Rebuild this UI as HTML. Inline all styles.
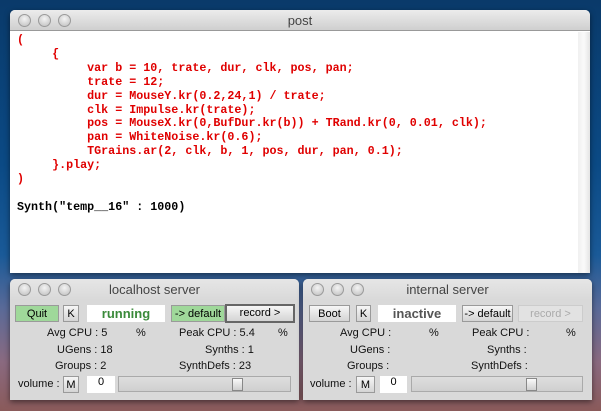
<!DOCTYPE html>
<html><head><style>
*{margin:0;padding:0;box-sizing:border-box}
body{width:601px;height:411px;overflow:hidden;position:relative;background:linear-gradient(180deg,#0a3a6a 0%,#0b4a85 40%,#1a5a98 62%,#5a6a98 75%,#8a6a80 88%,#8a5a5a 100%);font-family:"Liberation Sans",sans-serif}
.a{position:absolute}
.win{position:absolute;background:#d9d9d9;border-radius:5px 5px 0 0;overflow:hidden;box-shadow:0 2px 6px rgba(0,0,0,.5)}
.tb{position:absolute;left:0;right:0;top:0;height:21px;background:linear-gradient(#ececec,#cfcfcf);border-bottom:1px solid #999;text-align:center;font-size:13px;color:#444;line-height:21px}
.lt{position:absolute;top:4px;width:13px;height:13px;border-radius:50%;background:radial-gradient(circle at 50% 35%,#f4f4f4,#bdbdbd);border:1px solid #9a9a9a}
pre{position:absolute;left:17px;top:34px;font:bold 11.7px/13.9px "Liberation Mono",monospace;color:#e00000}
.btn{position:absolute;height:17px;font-size:11px;text-align:center;line-height:17px;background:linear-gradient(#f6f6f6,#d4d4d4);border:1px solid #9a9a9a;color:#000}
.fld{position:absolute;height:17px;background:#fff;text-align:center;font-weight:bold;font-size:13px;line-height:17px}
.t{position:absolute;font-size:11px;color:#111;line-height:13px}
.sl{position:absolute;height:16px;background:linear-gradient(#dedede,#cfcfcf);border:1px solid #aaa}
.th{position:absolute;top:1px;width:11px;height:13px;background:linear-gradient(#fafafa,#cfcfcf);border:1px solid #888}
</style></head><body>
<div class="win" style="left:10px;top:10px;width:580px;height:263px;background:#fff">
<div class="tb">post</div>
<div class="lt" style="left:8px"></div><div class="lt" style="left:28px"></div><div class="lt" style="left:48px"></div>
<div class="a" style="left:568px;top:22px;width:12px;height:241px;background:linear-gradient(90deg,#f0f0f0,#fafafa,#e4e4e4)"></div>
</div>
<pre>(
     {
          var b = 10, trate, dur, clk, pos, pan;
          trate = 12;
          dur = MouseY.kr(0.2,24,1) / trate;
          clk = Impulse.kr(trate);
          pos = MouseX.kr(0,BufDur.kr(b)) + TRand.kr(0, 0.01, clk);
          pan = WhiteNoise.kr(0.6);
          TGrains.ar(2, clk, b, 1, pos, dur, pan, 0.1);
     }.play;
)

<span style="color:#000">Synth("temp__16" : 1000)</span></pre>

<div class="win" style="left:10px;top:279px;width:289px;height:121px">
<div class="tb" style="border-bottom:none;background:linear-gradient(#e6e6e6,#d9d9d9)">localhost server</div>
<div class="lt" style="left:8px"></div><div class="lt" style="left:28px"></div><div class="lt" style="left:48px"></div>
</div>
<div class="btn" style="left:15px;top:305px;width:44px;background:#9fd89a">Quit</div>
<div class="btn" style="left:63px;top:305px;width:16px">K</div>
<div class="fld" style="left:87px;top:305px;width:78px;color:#3a8a3a">running</div>
<div class="btn" style="left:171px;top:305px;width:54px;background:#9fd89a">-&gt; default</div>
<div class="btn" style="left:225px;top:304px;width:70px;height:19px;border:2px solid #666;line-height:15px">record &gt;</div>
<div class="t" style="left:47px;top:327px">Avg CPU : 5</div><div class="t" style="left:136px;top:327px">%</div>
<div class="t" style="left:179px;top:327px">Peak CPU : 5.4</div><div class="t" style="left:278px;top:327px">%</div>
<div class="t" style="left:57px;top:344px">UGens : 18</div>
<div class="t" style="left:205px;top:344px">Synths : 1</div>
<div class="t" style="left:55px;top:360px">Groups : 2</div>
<div class="t" style="left:179px;top:360px">SynthDefs : 23</div>
<div class="t" style="left:18px;top:378px">volume :</div>
<div class="btn" style="left:63px;top:376px;width:16px">M</div>
<div class="fld" style="left:87px;top:376px;width:28px;font-weight:normal;font-size:11px;line-height:12px">0</div>
<div class="sl" style="left:118px;top:376px;width:173px"><div class="th" style="left:113px"></div></div>

<div class="win" style="left:303px;top:279px;width:289px;height:121px">
<div class="tb" style="border-bottom:none;background:linear-gradient(#e6e6e6,#d9d9d9)">internal server</div>
<div class="lt" style="left:8px"></div><div class="lt" style="left:28px"></div><div class="lt" style="left:48px"></div>
</div>
<div class="btn" style="left:309px;top:305px;width:41px">Boot</div>
<div class="btn" style="left:356px;top:305px;width:15px">K</div>
<div class="fld" style="left:378px;top:305px;width:78px;color:#555">inactive</div>
<div class="btn" style="left:462px;top:305px;width:51px">-&gt; default</div>
<div class="btn" style="left:518px;top:305px;width:65px;color:#aaa;background:#e2e2e2;border-color:#ccc">record &gt;</div>
<div class="t" style="left:340px;top:327px">Avg CPU :</div><div class="t" style="left:429px;top:327px">%</div>
<div class="t" style="left:472px;top:327px">Peak CPU :</div><div class="t" style="left:566px;top:327px">%</div>
<div class="t" style="left:350px;top:344px">UGens :</div>
<div class="t" style="left:487px;top:344px">Synths :</div>
<div class="t" style="left:347px;top:360px">Groups :</div>
<div class="t" style="left:471px;top:360px">SynthDefs :</div>
<div class="t" style="left:310px;top:378px">volume :</div>
<div class="btn" style="left:356px;top:376px;width:19px">M</div>
<div class="fld" style="left:380px;top:376px;width:27px;font-weight:normal;font-size:11px;line-height:12px">0</div>
<div class="sl" style="left:411px;top:376px;width:172px"><div class="th" style="left:114px"></div></div>
</body></html>
